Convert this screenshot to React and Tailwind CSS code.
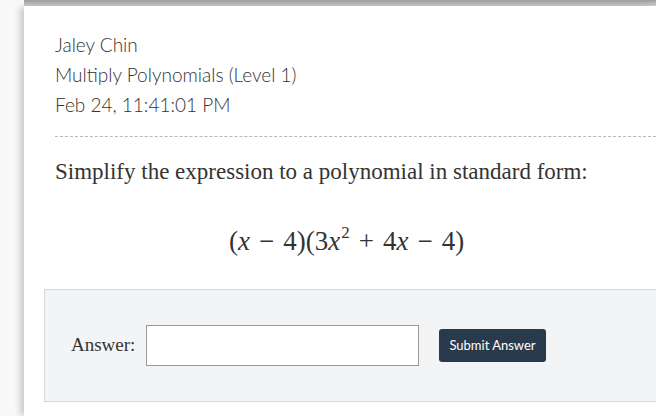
import React from "react";

export default function App() {
  const op = "mx-[9px]";
  return (
    <div className="w-[656px] h-[416px] overflow-hidden bg-[#f7f7f7] flex">
      <div className="w-[24px] shrink-0 bg-[#f8f8f8]" />
      <div className="flex-1 flex flex-col min-w-0">
        <div className="h-[6px] shrink-0 bg-gradient-to-b from-[#9c9c9c] to-[#cfcfcf]" />
        <div className="flex-1 bg-white shadow-[-5px_0_6px_-1px_rgba(0,0,0,0.18)] pl-[31px] pt-[24px]">
          <div
            className="text-[#333] text-[19px] leading-[30px] font-light"
            style={{ fontFamily: "Lato, sans-serif" }}
          >
            <div>Jaley Chin</div>
            <div>Multiply Polynomials (Level 1)</div>
            <div>Feb 24, 11:41:01 PM</div>
          </div>
          <div className="mt-[16px] border-t border-dashed border-[#b8b8b8]" />
          <div
            className="mt-[20px] text-[23px] leading-[30px] text-[#333]"
            style={{ fontFamily: "'Liberation Serif', serif" }}
          >
            Simplify the expression to a polynomial in standard form:
          </div>
          <div
            className="mt-[37px] pl-[174px] text-[27px] leading-[35px] text-[#333] whitespace-nowrap"
            style={{ fontFamily: "'Liberation Serif', serif" }}
          >
            (<i>x</i>
            <span className={op}>−</span>4)(3<i>x</i>
            <sup className="text-[17px] relative top-[-12px] ml-[1px]">2</sup>
            <span className={op}>+</span>4<i>x</i>
            <span className={op}>−</span>4)
          </div>
          <div className="mt-[30px] -ml-[11px] h-[113px] bg-[#f3f4f6] border border-[#d8d8d8] border-r-0 flex items-center pl-[26px]">
            <span
              className="text-[19px] text-[#333] mr-[11px]"
              style={{ fontFamily: "'Liberation Serif', serif" }}
            >
              Answer:
            </span>
            <div className="w-[273px] h-[41px] bg-white border border-[#999]" />
            <button
              className="ml-[20px] h-[33px] px-[10px] rounded-[3px] bg-[#2a3a4d] text-white text-[13px]"
              style={{ fontFamily: "Lato, sans-serif" }}
            >
              Submit Answer
            </button>
          </div>
        </div>
      </div>
    </div>
  );
}
